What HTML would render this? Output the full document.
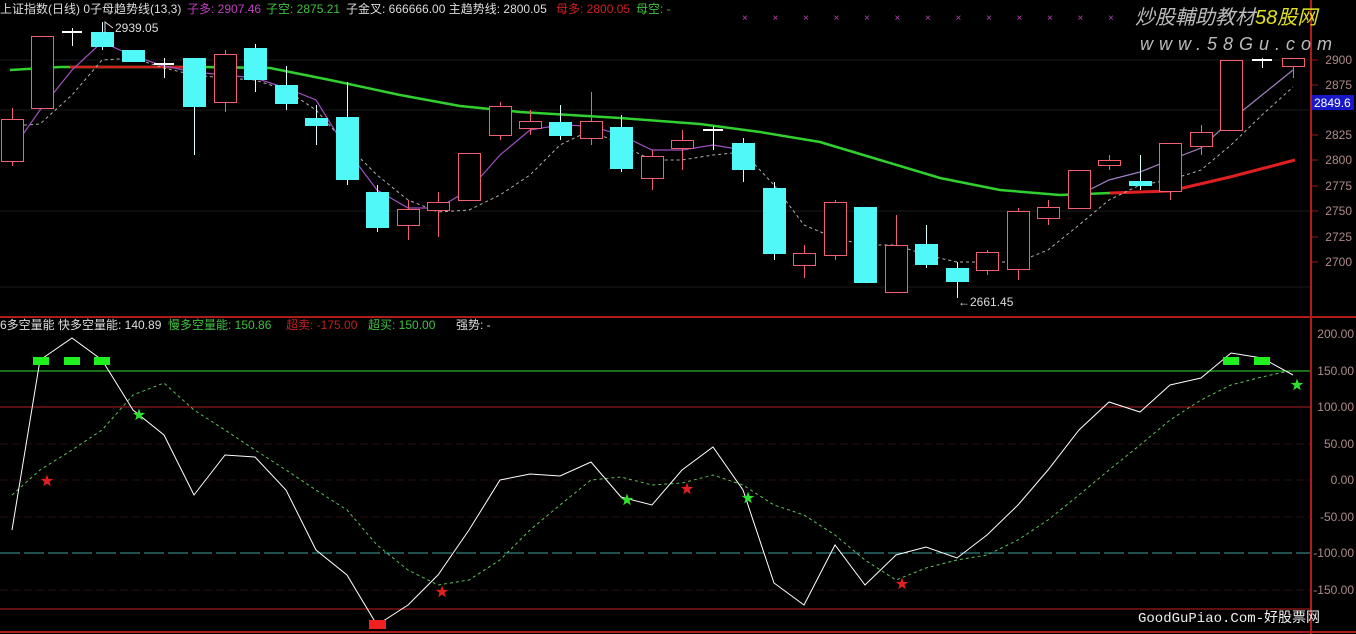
<!DOCTYPE html><html><head><meta charset="utf-8"><style>
body{margin:0;background:#000;width:1356px;height:634px;overflow:hidden;font-family:"Liberation Sans","Noto Sans CJK SC",sans-serif}
svg{display:block}
</style></head><body>
<svg id="s" width="1356" height="634" xmlns="http://www.w3.org/2000/svg" font-family="Liberation Sans, Noto Sans CJK SC, sans-serif" font-size="12">
<rect width="1356" height="634" fill="#000"/>
<g id="grid"></g>
<line x1="1311" y1="0" x2="1311" y2="634" stroke="#b01c1c" stroke-width="2"/>
<line x1="0" y1="317" x2="1356" y2="317" stroke="#b01c1c" stroke-width="2"/>
<line x1="0" y1="632" x2="1356" y2="632" stroke="#b01c1c" stroke-width="2"/>
<g id="c"></g>
<text x="0" y="13" fill="#ddd">上证指数(日线) 0子母趋势线(13,3)</text>
<text x="187" y="13" fill="#c040c0">子多: 2907.46</text>
<text x="266" y="13" fill="#40c040">子空: 2875.21</text>
<text x="346" y="13" fill="#ddd">子金叉: 666666.00  主趋势线: 2800.05</text>
<text x="556" y="13" fill="#d02020">母多: 2800.05</text>
<text x="636" y="13" fill="#40c040">母空: -</text>
<text x="115" y="32" fill="#ddd">2939.05</text>
<text x="958" y="306" fill="#ddd">←2661.45</text>
<text x="0" y="329" fill="#ddd">6多空量能  快多空量能: 140.89</text>
<text x="168" y="329" fill="#40c040">慢多空量能: 150.86</text>
<text x="286" y="329" fill="#c02020">超卖: -175.00</text>
<text x="368" y="329" fill="#40c040">超买: 150.00</text>
<text x="456" y="329" fill="#ddd">强势: -</text>
<text x="1135" y="24" fill="#bbb" font-size="20" font-style="italic">炒股輔助教材<tspan fill="#e0e020">58股网</tspan></text>
<text x="1140" y="50" fill="#bbb" font-size="18" font-style="italic" letter-spacing="6">www.58Gu.com</text>
<text x="1138" y="622" fill="#eee" font-size="14" font-family="Liberation Mono, Noto Sans CJK SC, monospace">GoodGuPiao.Com-好股票网</text>
<rect x="1312" y="95" width="42" height="15" fill="#1818c8"/>
<text x="1314" y="107" fill="#fff">2849.6</text>
</svg>
<script>
const NS="http://www.w3.org/2000/svg",c=document.getElementById('c'),g=document.getElementById('grid');
function el(t,a,p){const e=document.createElementNS(NS,t);for(const k in a)e.setAttribute(k,a[k]);(p||c).appendChild(e);return e}
[60,110,211,287].forEach(y=>el('line',{x1:0,y1:y,x2:1310,y2:y,stroke:'#1c1c1c'},g));
[[2900,60],[2875,85],[2825,135],[2800,160],[2775,186],[2750,211],[2725,237],[2700,262]].forEach(([v,y])=>{el('text',{x:1352,y:y+4,fill:'#b08a8a','text-anchor':'end'},g).textContent=v;el('line',{x1:1311,y1:y,x2:1318,y2:y,stroke:'#a01818'},g)});
[['200.00',334],['150.00',371],['100.00',407],['50.00',444],['0.00',480],['-50.00',517],['-100.00',553],['-150.00',590]].forEach(([v,y])=>{el('text',{x:1354,y:y+4,fill:'#b08a8a','text-anchor':'end'},g).textContent=v;});
[444,480,517,590].forEach(y=>el('line',{x1:0,y1:y,x2:1310,y2:y,stroke:'#2a1010','stroke-dasharray':'8 4'},g));
el('line',{x1:0,y1:407,x2:1310,y2:407,stroke:'#b02020'},g);
el('line',{x1:0,y1:371,x2:1310,y2:371,stroke:'#30e030'},g);
el('line',{x1:0,y1:553,x2:1310,y2:553,stroke:'#40a0a0','stroke-dasharray':'20 4'},g);
el('line',{x1:0,y1:609,x2:1310,y2:609,stroke:'#c02020'},g);
for(let x=745;x<1120;x+=30.5){el('text',{x:x-3,y:21,fill:'#c040c0','font-size':10},g).textContent='×'}
const C=[[12,119,161,'r',108,166],[42,36,108,'r',36,108],[72,32,32,'w',28,46],[102,32,47,'c',22,50],[133,50,62,'c',50,62],[164,64,64,'w',58,78],[194,58,107,'c',58,155],[225,54,102,'r',50,112],[255,48,80,'c',44,92],[286,85,104,'c',66,110],[316,118,126,'c',105,145],[347,117,180,'c',82,185],[377,192,228,'c',185,232],[408,209,225,'r',200,240],[438,202,210,'r',192,237],[469,153,200,'r',153,200],[500,106,135,'r',102,140],[530,121,128,'r',110,135],[560,122,136,'c',105,140],[591,121,138,'r',92,145],[621,127,169,'c',115,172],[652,156,178,'r',150,190],[682,140,148,'r',130,170],[713,130,130,'w',126,150],[743,143,170,'c',138,182],[774,188,254,'c',182,260],[804,253,265,'r',245,278],[835,202,255,'r',200,260],[865,207,283,'c',207,283],[896,245,292,'r',215,293],[926,244,265,'c',225,268],[957,268,282,'c',262,298],[987,252,270,'r',250,275],[1018,211,269,'r',208,280],[1048,207,218,'r',200,225],[1079,170,208,'r',170,208],[1109,160,165,'r',155,170],[1140,181,186,'c',155,190],[1170,143,191,'r',143,200],[1201,132,146,'r',125,155],[1231,60,130,'r',60,130],[1262,60,60,'w',58,68],[1293,58,66,'r',58,78]];
function pl(pts,a){el('polyline',Object.assign({points:pts.map(p=>p.join(',')).join(' '),fill:'none'},a))}
pl([[10,70],[60,67],[200,67],[270,68],[330,80],[400,95],[460,106],[520,112],[620,118],[700,124],[760,132],[820,142],[880,160],[940,178],[1000,190],[1060,195],[1110,193]],{stroke:'#30d030','stroke-width':2.5});
pl([[70,67],[190,67]],{stroke:'#d02020','stroke-width':2.5});
pl([[1110,193],[1170,191],[1230,177],[1295,160]],{stroke:'#e02020','stroke-width':3});
const dm=[[12,126],[40,124],[72,95],[102,60],[133,58],[164,68],[194,75],[225,78],[255,80],[286,90],[316,110],[347,145],[377,175],[408,200],[438,212],[469,210],[500,195],[530,175],[560,145],[591,130],[621,145],[652,160],[682,160],[713,155],[743,152],[774,185],[804,225],[835,238],[865,245],[896,245],[926,255],[957,262],[987,262],[1018,262],[1048,250],[1079,225],[1109,200],[1140,185],[1170,180],[1201,170],[1231,145],[1262,115],[1293,87]];
pl(dm,{stroke:'#b0b0b0','stroke-dasharray':'3 3'});
pl([[12,150],[40,110],[72,70],[102,42],[133,56],[164,66],[194,72],[225,75],[255,78],[286,88],[316,100],[347,150],[377,190],[408,208],[438,208],[469,190],[500,155],[530,130],[560,125],[591,126],[621,135],[652,150],[682,150],[713,145],[743,150]],{stroke:'#a050c0','stroke-width':1.2});
pl([[1079,195],[1109,180],[1140,172],[1170,160],[1201,148],[1231,120],[1262,95],[1293,70]],{stroke:'#a080c0','stroke-width':1.2});
C.forEach(([x,t,b,k,wt,wb])=>{
 const xc=x+0.5;
 if(k=='w'){el('line',{x1:xc,y1:wt,x2:xc,y2:wb,stroke:'#fff'});el('line',{x1:x-10,y1:t,x2:x+10,y2:t,stroke:'#fff','stroke-width':2});return}
 const col=k=='r'?'#f06070':'#50f8f8';
 el('line',{x1:xc,y1:wt,x2:xc,y2:wb,stroke:k=='r'?col:'#e0ffff'});
 if(k=='r')el('rect',{x:x-10.5,y:t+0.5,width:22,height:Math.max(b-t,1),fill:'#000',stroke:col});
 else el('rect',{x:x-11,y:t,width:23,height:Math.max(b-t,2),fill:col});
});
el('polyline',{points:'105,33 105,22 113,28',fill:'none',stroke:'#ddd'});
pl([[12,495],[40,470],[72,450],[102,430],[133,395],[164,383],[194,410],[225,430],[255,450],[286,470],[316,490],[347,510],[377,545],[408,570],[438,585],[469,580],[500,560],[530,530],[560,505],[591,480],[621,477],[652,485],[682,483],[713,475],[743,485],[774,505],[804,515],[835,535],[865,560],[896,580],[926,568],[957,560],[987,555],[1018,540],[1048,520],[1079,495],[1109,470],[1140,445],[1170,420],[1201,400],[1231,385],[1262,377],[1293,370]],{stroke:'#60c060','stroke-dasharray':'3 3'});
pl([[12,530],[40,360],[72,338],[102,360],[133,410],[164,435],[194,495],[225,455],[255,457],[286,490],[316,550],[347,575],[377,625],[408,605],[438,575],[469,530],[500,480],[530,474],[560,476],[591,462],[621,497],[652,505],[682,470],[713,447],[743,490],[774,583],[804,605],[835,545],[865,585],[896,555],[926,547],[957,558],[987,535],[1018,505],[1048,470],[1079,430],[1109,402],[1140,412],[1170,385],[1201,378],[1231,353],[1262,358],[1293,375]],{stroke:'#fff'});
[41,72,102,1231,1262].forEach(x=>el('rect',{x:x-8,y:357,width:16,height:8,fill:'#20f020'}));
el('rect',{x:369,y:620,width:17,height:9,fill:'#f02020'});
function star(x,y,col){let p=[];for(let i=0;i<10;i++){const r=i%2?2.6:6.5,a=-Math.PI/2+i*Math.PI/5;p.push((x+r*Math.cos(a)).toFixed(1)+','+(y+r*Math.sin(a)).toFixed(1))}el('polygon',{points:p.join(' '),fill:col})}
[[47,481],[442,592],[687,489],[902,584]].forEach(p=>star(p[0],p[1],'#e02020'));
[[139,415],[627,500],[748,498],[1297,385]].forEach(p=>star(p[0],p[1],'#30e030'));
</script>
</body></html>
